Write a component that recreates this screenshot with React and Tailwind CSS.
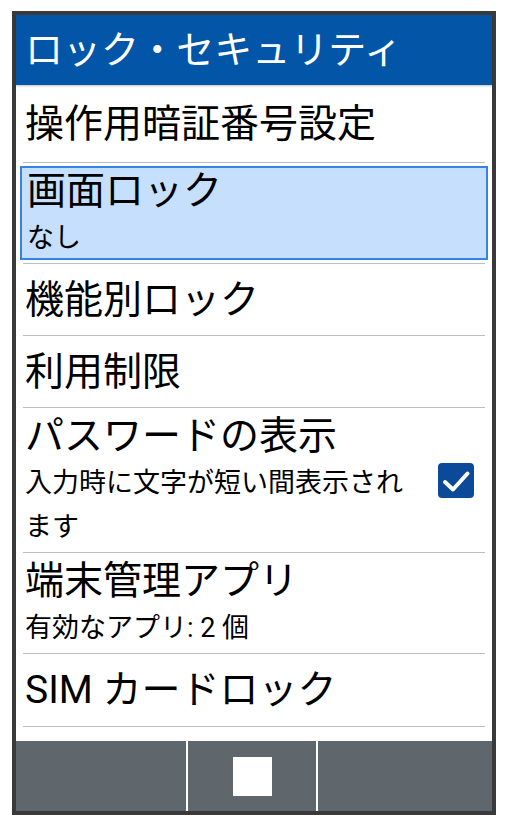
import React from "react";

const FONT = { fontFamily: 'Roboto, "Noto Sans CJK JP", sans-serif' };

function Divider() {
  return (
    <div className="py-[3px]">
      <div className="mx-[3px] h-px bg-[#bcbfc1]" />
    </div>
  );
}

function Row({ h, title, sub, selected, pt }) {
  return (
    <>
      <div
        className={
          "flex flex-col justify-center pl-[5px] " +
          (selected ? "bg-[#c5dffd] border-2 border-[#3584e4]" : "")
        }
        style={{ height: h, paddingTop: pt || 0 }}
      >
        <div className="text-[39px] leading-[48px] text-black whitespace-nowrap">{title}</div>
        {sub && <div className="text-[27px] leading-[46px] text-black whitespace-nowrap">{sub}</div>}
      </div>
      <Divider />
    </>
  );
}

export default function App() {
  return (
    <div className="w-[507px] h-[826px] bg-white pt-[11px] pl-[12px]" style={FONT}>
      <div className="w-[484px] h-[804px] border-4 border-[#3a3a3a] flex flex-col bg-white">
        <div className="h-[70px] bg-[#0355a7] flex items-center pl-[9px] shadow-[0_1px_2px_rgba(0,0,0,0.25)] relative z-10">
          <span className="text-white text-[38px] leading-none">ロック・セキュリティ</span>
        </div>
        <div className="flex-1 px-[4px] overflow-hidden">
          <Row h={74} title="操作用暗証番号設定" pt={4} />
          <Row h={94} title="画面ロック" sub="なし" selected pt={2} />
          <Row h={65} title="機能別ロック" />
          <Row h={65} title="利用制限" />
          <div className="flex items-center h-[138px] pl-[5px] pr-[14px]">
            <div className="flex-1 min-w-0">
              <div className="text-[39px] leading-[50px] text-black">パスワードの表示</div>
              <div className="text-[27px] leading-[44px] text-black">入力時に文字が短い間表示されます</div>
            </div>
            <div className="ml-[14px] w-[36px] h-[35px] rounded-[4px] bg-[#0a4a98] flex items-center justify-center shrink-0">
              <svg width="36" height="35" viewBox="0 0 36 35">
                <path d="M7 19 L15 26.5 L29.5 10.5" fill="none" stroke="white" strokeWidth="4" strokeLinecap="round" strokeLinejoin="round" />
              </svg>
            </div>
          </div>
          <Divider />
          <Row h={94} title="端末管理アプリ" sub="有効なアプリ: 2 個" pt={2} />
          <Row h={66} title="SIM カードロック" />
        </div>
        <div className="h-[70px] bg-[#5f676c] flex">
          <div className="w-[172px] border-r-2 border-white" />
          <div className="w-[130px] border-r-2 border-white flex items-center justify-center">
            <div className="w-[39px] h-[39px] bg-white" />
          </div>
          <div className="flex-1" />
        </div>
      </div>
    </div>
  );
}
